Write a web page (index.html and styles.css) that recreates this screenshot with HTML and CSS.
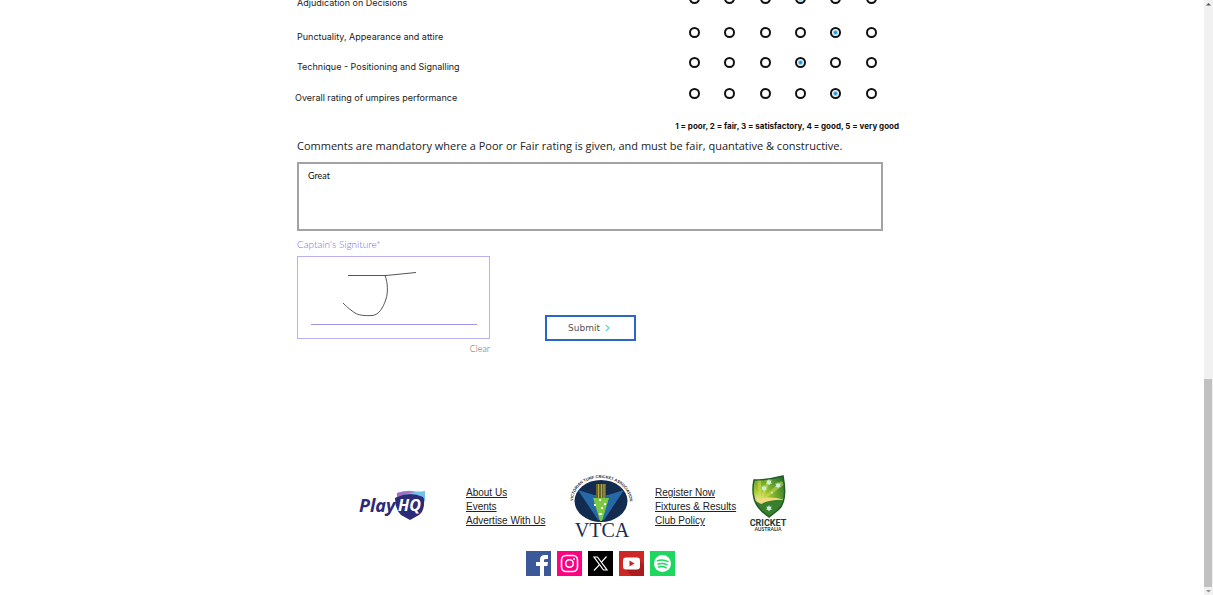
FILE: index.html
```html
<!DOCTYPE html>
<html lang="en">
<head>
<meta charset="utf-8">
<meta name="viewport" content="width=device-width, initial-scale=1">
<title>Captain's Umpire Report</title>
<link rel="stylesheet" href="styles.css">
</head>
<body>
<div class="page">
  <main class="column">
    <form class="report">
      <div class="rating rating-first" role="radiogroup" aria-labelledby="q1">
        <span class="rating-label" id="q1">Adjudication on Decisions</span>
        <div class="choices">
          <input type="radio" name="q1" aria-label="0"><input type="radio" name="q1" aria-label="1"><input type="radio" name="q1" aria-label="2"><input type="radio" name="q1" aria-label="3" checked><input type="radio" name="q1" aria-label="4"><input type="radio" name="q1" aria-label="5">
        </div>
      </div>
      <div class="rating" role="radiogroup" aria-labelledby="q2">
        <span class="rating-label" id="q2">Punctuality, Appearance and attire</span>
        <div class="choices">
          <input type="radio" name="q2" aria-label="0"><input type="radio" name="q2" aria-label="1"><input type="radio" name="q2" aria-label="2"><input type="radio" name="q2" aria-label="3"><input type="radio" name="q2" aria-label="4" checked><input type="radio" name="q2" aria-label="5">
        </div>
      </div>
      <div class="rating" role="radiogroup" aria-labelledby="q3">
        <span class="rating-label" id="q3">Technique - Positioning and Signalling</span>
        <div class="choices">
          <input type="radio" name="q3" aria-label="0"><input type="radio" name="q3" aria-label="1"><input type="radio" name="q3" aria-label="2"><input type="radio" name="q3" aria-label="3" checked><input type="radio" name="q3" aria-label="4"><input type="radio" name="q3" aria-label="5">
        </div>
      </div>
      <div class="rating rating-overall" role="radiogroup" aria-labelledby="q4">
        <span class="rating-label" id="q4">Overall rating of umpires performance</span>
        <div class="choices">
          <input type="radio" name="q4" aria-label="0"><input type="radio" name="q4" aria-label="1"><input type="radio" name="q4" aria-label="2"><input type="radio" name="q4" aria-label="3"><input type="radio" name="q4" aria-label="4" checked><input type="radio" name="q4" aria-label="5">
        </div>
      </div>
      <p class="scale">1 = poor, 2 = fair, 3 = satisfactory, 4 = good, 5 = very good</p>
      <label class="comments-label" for="comments">Comments are mandatory where a Poor or Fair rating is given, and must be fair, quantative &amp; constructive.</label>
      <textarea class="comments" id="comments">Great</textarea>
      <div class="sign-row">
        <div class="signature">
          <span class="signature-label" id="sig">Captain's Signiture*</span>
          <div class="pad" role="img" aria-labelledby="sig">
            <svg viewBox="0 0 191 81" fill="none">
              <path d="M50 18.500H88L118 15.500" stroke="#555"/>
              <path d="M87 18.500C90 26 90 36 88 42C85 51 81 58 74 58.500C66 59 60 58 57 56C51 52 48 49 45 46" stroke="#555"/>
              <path d="M13 67.500H179" stroke="#9f95ea"/>
            </svg>
          </div>
          <button class="clear" type="button">Clear</button>
        </div>
        <button class="submit" type="submit">Submit
          <svg viewBox="0 0 5 8" fill="none"><path d="M.8.8L4 4L.8 7.200" stroke="#45d5d2" stroke-width="1.100"/></svg>
        </button>
      </div>
    </form>

    <footer class="footer">
      <div class="partners">
        <svg class="playhq" viewBox="0 0 68 32" role="img" aria-label="PlayHQ">
          <path d="M38 3Q47 0 54 1Q60 2 66 1V11L39 8Z" fill="#73bfe5"/>
          <path d="M38 3Q47 0 56 2Q47 3 38 7Z" fill="#a46bc5"/>
          <path d="M38 7Q51 1 64 7L65 9Q66 21 60 25L51 30L42 25Q36 19 36 8Z" fill="#2d2a78"/>
          <text class="logo-play" x="0" y="22" fill="#2d2a78">Play</text>
          <text class="logo-hq" x="39" y="21" fill="#fff">HQ</text>
        </svg>
        <nav class="links links-left" aria-label="Association">
          <a href="#about">About Us</a>
          <a href="#events">Events</a>
          <a href="#advertise">Advertise With Us</a>
        </nav>
        <svg class="vtca" viewBox="0 0 62 64" role="img" aria-label="VTCA">
          <defs><path id="arc" d="M3 26C4 -5 58 -5 60 28"/></defs>
          <text class="logo-arc" fill="#222"><textPath href="#arc">VICTORIAN TURF CRICKET ASSOCIATION</textPath></text>
          <ellipse cx="31" cy="26" rx="26.500" ry="21" fill="#142b50"/>
          <path d="M8 15L24 20H38L54 15L34 45H28Z" fill="#2569a8"/>
          <path d="M26 9H36V24H26Z" fill="#68652b"/>
          <path d="M28.500 9V24M31.500 9V24M34 9V24" stroke="#b0a34c" stroke-width="1"/>
          <path d="M23 23H39L32 46H30Z" fill="#7bc943"/>
          <path d="M29 24h2v2h-2zM34 28h2v2h-2zM24 29h2v2h-2zM31 32h2v2h-2zM29 38h3v2h-3z" fill="#fff"/>
          <text class="logo-vtca" x="32" y="62" text-anchor="middle" fill="#172b50">VTCA</text>
        </svg>
        <nav class="links links-right" aria-label="Competition">
          <a href="#register">Register Now</a>
          <a href="#fixtures">Fixtures &amp; Results</a>
          <a href="#policy">Club Policy</a>
        </nav>
        <svg class="cricket" viewBox="0 0 40 58" role="img" aria-label="Cricket Australia">
          <defs>
            <radialGradient id="glow" cx=".25" cy=".6" r=".8"><stop offset="0" stop-color="#f1ee8c"/><stop offset=".35" stop-color="#9dc52c"/><stop offset="1" stop-color="#23712d"/></radialGradient>
            <clipPath id="shield"><path d="M5 5Q19 5 34 1Q39 27 29 35L20 42Q7 33 5 23Q3 15 5 5Z"/></clipPath>
          </defs>
          <g clip-path="url(#shield)">
            <path d="M0 0H40V44H0Z" fill="url(#glow)"/>
            <path d="M10 24L8 0H12L12 22L20 0H24L14 23L32 6L36 9L16 24Z" fill="#d5df55" opacity=".5"/>
            <path d="M0 27Q18 19 40 28V44H0Z" fill="#397f2d"/>
            <path d="M5 25Q18 20 37 25Q22 24 12 29Z" fill="#edda83"/>
          </g>
          <path d="M5 5Q19 5 34 1Q39 27 29 35L20 42Q7 33 5 23Q3 15 5 5Z" fill="none" stroke="#225c28" stroke-width="1.500"/>
          <path d="M20 4l.8 1.700 1.900-.2-.8 1.700 1 1.500-1.800.1-1.100 1.600-1-1.600-1.900-.1 1-1.500-.8-1.700 1.900.2zM29 7l.8 1.700 1.900-.2-.8 1.700 1 1.500-1.800.1-1.100 1.600-1-1.600-1.900-.1 1-1.500-.8-1.700 1.900.2zM15 10l.8 1.700 1.900-.2-.8 1.700 1 1.500-1.800.1-1.100 1.600-1-1.600-1.900-.1 1-1.500-.8-1.700 1.900.2zM20 30l.8 1.700 1.900-.2-.8 1.700 1 1.500-1.800.1-1.100 1.600-1-1.600-1.900-.1 1-1.500-.8-1.700 1.900.2zM23 16l1 2-1 1-1-1z" fill="#c9f0dc"/>
          <text class="logo-cricket" x="19" y="51" text-anchor="middle" fill="#173e34">CRICKET</text>
          <text class="logo-australia" x="19" y="56" text-anchor="middle" fill="#173e34">AUSTRALIA</text>
        </svg>
      </div>
      <div class="social">
        <a href="#facebook" aria-label="Facebook"><svg viewBox="0 0 25 25"><path fill="#3b5998" d="M0 0h25v25H0z"/><path fill="#fff" d="M14 25V15h-4v-4h4V8.500C14 5.300 16 4 19 4h3v4h-2.200C18.400 8 18 8.600 18 9.600V11h4l-.6 4H18v10z"/></svg></a>
        <a href="#instagram" aria-label="Instagram"><svg viewBox="0 0 25 25"><path fill="#ff0082" d="M0 0h25v25H0z"/><g fill="none" stroke="#fff" stroke-width="1.600"><rect x="4.500" y="4.500" width="16" height="16" rx="4.500"/><circle cx="12.500" cy="12.500" r="3.800"/></g><circle cx="17" cy="8" r="1" fill="#fff"/></svg></a>
        <a href="#x" aria-label="X"><svg viewBox="0 0 25 25"><path d="M0 0h25v25H0z"/><g fill="none" stroke="#fff" stroke-width="1.200"><path d="M6 6h3.500l9.500 13h-3.500z"/><path d="M18.500 5.500L13.300 11.400M11.300 13.800L6 19.500"/></g></svg></a>
        <a href="#youtube" aria-label="YouTube"><svg viewBox="0 0 25 25"><path fill="#cf2725" d="M0 0h25v25H0z"/><path fill="#ad1c1d" d="M19 8L25 14V25H13L6 18z"/><rect x="4" y="6.500" width="17" height="12" rx="3" fill="#fff"/><path fill="#c62525" d="M10.500 9.500v6l5-3z"/></svg></a>
        <a href="#spotify" aria-label="Spotify"><svg viewBox="0 0 25 25"><path fill="#1ed760" d="M0 0h25v25H0z"/><circle cx="12.500" cy="12.500" r="8.500" fill="#fff"/><path d="M7.500 9.800Q13 8 18 10.700M8 13Q13 11.500 17.200 13.800M8.500 16Q12.500 14.900 16.200 16.800" fill="none" stroke="#1ed760" stroke-width="1.500" stroke-linecap="round"/></svg></a>
      </div>
    </footer>
  </main>
  <div class="scrollbar" aria-hidden="true">
    <svg class="arrow" viewBox="0 0 9 8"><path d="M2 5.500L4.500 3L7 5.500z" fill="#505050"/></svg>
    <div class="track"><div class="thumb"></div></div>
    <svg class="arrow" viewBox="0 0 9 8"><path d="M2 3L4.500 5.500L7 3z" fill="#909090"/></svg>
  </div>
</div>
</body>
</html>
```
FILE: styles.css
```css
* { box-sizing: border-box; }
body {
  margin: 0;
  background: #fff;
  color: #222;
  font-family: Inter, "Liberation Sans", Arial, sans-serif;
  overflow: hidden;
}
button { background: none; border: 0; padding: 0; cursor: pointer; }
svg { display: block; }

.page { display: flex; height: 100vh; overflow: hidden; }
.column { width: 100%; max-width: 614px; margin: 0 auto; }

/* The report is scrolled so that its upper ratings are out of view */
.report { margin-top: -7px; padding-left: 2px; }
.rating { display: flex; justify-content: space-between; height: 30px; padding-right: 20px; }
.rating-first { height: 34px; }
.rating-overall { margin: 1px 0 0 -2px; }
.rating-label { padding-top: 4px; font-size: 9px; line-height: 12px; }
.choices { display: grid; grid-template-columns: repeat(6, 1fr); width: 212px; justify-items: center; align-items: start; }
.choices input {
  appearance: none;
  width: 11px;
  height: 11px;
  margin: 0;
  border: 2px solid #111;
  border-radius: 50%;
  background: #fff;
}
.choices input:checked { background: radial-gradient(circle, #2199dc 1px, #8fd0f5 2px, #fff 3px); }
.scale {
  margin: 0 10px 0 0;
  font: 700 8px/16px Inter, sans-serif;
  text-align: right;
  color: #111;
}
.comments-label { display: block; margin-top: 4px; font: 11px/16px "Open Sans", sans-serif; }
.comments {
  display: block;
  width: calc(100% - 26px);
  height: 69px;
  margin-top: 8px;
  padding: 6px 9px;
  border: 2px solid #a3a3a3;
  resize: none;
  font: 9px/12px Lato, sans-serif;
  color: #111;
}

.sign-row { display: flex; align-items: flex-start; gap: 55px; padding-top: 7px; }
.signature { display: flex; flex-direction: column; width: 193px; }
.signature-label { font: 300 10px/12px Lato, sans-serif; color: #7a6be8; }
.pad { height: 83px; margin-top: 6px; border: 1px solid #b9b1f1; }
.clear { align-self: flex-end; margin-top: 4px; font: 300 9px/12px Lato, sans-serif; color: #666; }
.submit {
  display: flex;
  align-items: center;
  justify-content: center;
  gap: 5px;
  width: 91px;
  height: 26px;
  margin-top: 77px;
  padding-right: 3px;
  border: 2px solid #2a65c8;
  font: 9px/12px "DejaVu Sans", sans-serif;
  color: #555;
}
.submit svg { width: 5px; height: 8px; }

.footer { padding-top: 120px; }
.partners { display: flex; align-items: flex-start; padding-left: 64px; }
.playhq { width: 68px; height: 32px; margin-top: 15px; }
.links { display: flex; flex-direction: column; align-items: flex-start; padding-top: 11px; }
.links a { font: 10px/14px "Liberation Sans", sans-serif; color: #222; text-decoration: underline; white-space: nowrap; }
.links-left { width: 104px; margin-left: 39px; }
.links-right { width: 94px; margin-left: 23px; }
.vtca { width: 62px; height: 64px; overflow: visible; }
.cricket { width: 40px; height: 58px; }
.logo-play { font: italic 700 18px "Noto Sans", sans-serif; }
.logo-hq { font: italic 700 16px "Noto Sans", sans-serif; }
.logo-arc { font: 700 4px "Liberation Sans", sans-serif; }
.logo-vtca { font: 20px "Liberation Serif", serif; }
.logo-cricket { font: 700 9px Roboto, sans-serif; }
.logo-australia { font: 700 5px Lato, sans-serif; }

.social { display: flex; justify-content: center; gap: 6px; padding: 12px 4px 0 0; }
.social a { width: 25px; height: 25px; }

.scrollbar { display: flex; flex-direction: column; flex: none; width: 9px; background: #f1f1f1; }
.arrow { width: 9px; height: 8px; flex: none; }
.track { display: flex; flex: 1; align-items: flex-end; }
.thumb { width: 8px; height: 36%; background: #c1c1c1; }
```
